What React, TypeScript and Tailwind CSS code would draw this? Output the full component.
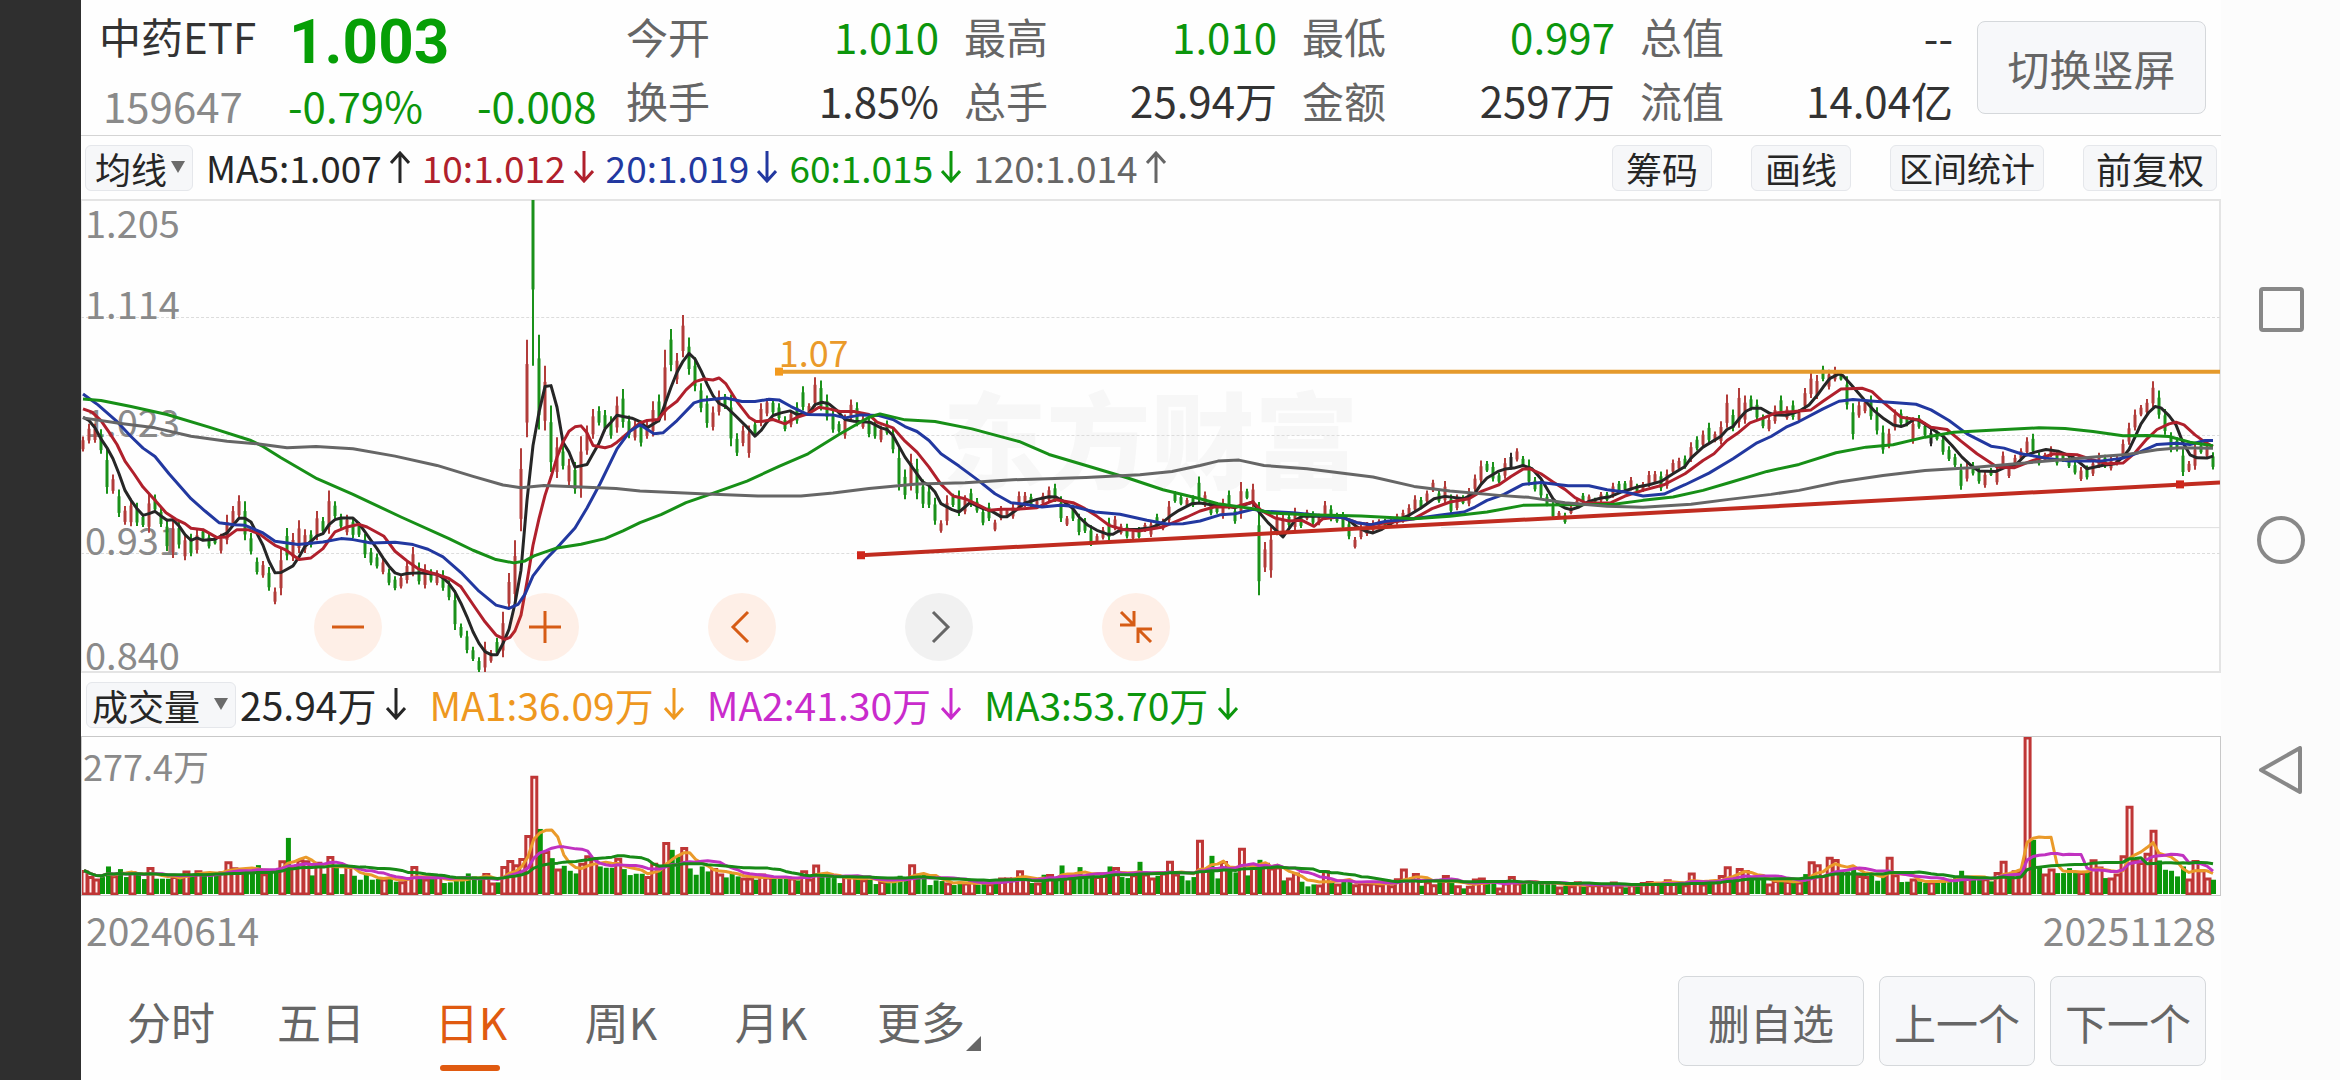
import React from "react";

// daily candles: colour, high, low (three units per pixel, 27 is the top of the pane)
const CANDLES = `
r738,783 r700,759 r700,757 g716,790 g775,910 r852,910 g897,980 r947,1003 r925,1008 g937,1007 g970,1010 r910,1027
g912,965 g950,1010 g985,1082 r985,1103 g993,1075 r1030,1110 g1030,1098 r1017,1090 g1015,1050 g1030,1075 g1035,1063
r1030,1090 r973,1062 r947,1008 r915,985 g933,1050 g1028,1093 g1102,1153 r1112,1163 g1130,1202 r1192,1242 r1075,1215
g1013,1110 r1028,1112 r990,1088 r1017,1088 g1020,1072 r962,1050 g980,1030 r900,1030 g933,985 g970,1015 r973,1035
g980,1043 g995,1040 g1030,1103 g1073,1125 g1090,1135 r1105,1152 g1135,1185 g1158,1200 r1152,1195 r1110,1180
r1070,1158 g1117,1183 r1122,1195 g1137,1177 r1140,1185 g1140,1202 g1170,1230 g1200,1320 g1300,1343 g1322,1390
g1370,1413 g1402,1446 r1355,1446 r1380,1418 g1343,1395 r1265,1402 r1148,1257 r1050,1240 r773,1023 r447,740 g27,525
g432,717 r525,720 g645,845 r740,863 g765,837 r805,885 g815,910 r737,922 r705,793 r655,745 g647,705 g658,722
g677,745 r618,727 g595,712 g675,743 r690,750 g690,768 r690,745 r632,738 g612,695 r477,690 g415,542 r487,580
r373,500 g440,552 g500,602 g578,665 g615,712 r648,720 r600,675 g610,655 g612,767 g728,797 r705,767 r705,802
g690,738 r638,707 r622,677 g625,672 g638,690 g677,722 r658,710 g635,700 g587,660 r638,672 r560,650 g570,660
g612,690 g660,727 g692,727 r672,745 r627,690 g635,707 r675,715 g677,740 g692,745 r705,755 g690,733 g710,788
g770,900 g837,927 r790,900 g805,927 g867,953 g887,953 g922,1003 r990,1027 r915,1005 g910,950 g900,977 r915,972
g895,950 g923,967 g952,1005 g937,992 r988,1023 r947,990 r953,980 r940,985 r903,960 r905,950 g910,952 r925,955
r907,945 r888,935 g880,935 g918,995 r977,1007 g943,992 g970,1035 g983,1028 g1005,1067 r1030,1060 r1010,1048
g982,1050 r977,1020 r1000,1033 g1000,1045 r1017,1048 g1010,1045 r997,1025 r990,1040 g970,1013 r985,1020 r932,1000
g902,937 g912,945 r922,950 g915,950 g858,935 r903,950 g933,975 g937,970 r925,985 g900,957 g950,1000 r875,985
g895,927 r880,950 g935,1215 r1055,1145 r1010,1163 r970,1035 r970,1037 g970,1010 r952,1020 g970,1013 r958,990
g963,1003 r970,1005 r932,985 g945,993 g967,997 g965,1020 g987,1047 r1040,1075 r1003,1047 r995,1037 r990,1025
r987,1010 g985,1010 r985,1005 r970,1003 r958,997 r942,985 r915,965 g920,957 r900,938 r868,905 g900,937 r872,940
g912,970 r912,960 g915,942 r893,948 r852,903 r810,880 g812,845 g815,873 g847,878 r803,865 k787,837 r773,813
g797,830 g807,885 g860,903 g870,923 g910,948 g935,985 r962,985 g967,1000 r945,972 r925,950 g908,940 r912,938
g922,942 r905,935 g905,933 r877,922 g872,905 g872,900 r860,900 g880,905 r875,905 r842,890 r842,880 g843,902
r837,895 r807,850 r802,840 g795,835 r755,815 g737,780 r720,770 g697,757 r723,755 r692,762 r612,712 g657,722
r592,712 r615,700 g615,660 g627,690 g672,713 r677,722 r645,700 g615,672 r647,688 g630,688 r657,693 r592,655
r545,622 r553,625 g525,572 r537,597 r528,573 g545,570 g557,657 g638,747 r632,682 r625,668 g615,688 g650,732
g705,790 r715,773 r657,720 g657,705 g677,707 r680,760 g673,715 g695,740 k715,767 g720,750 g733,793 g767,812
g790,830 g820,898 r817,873 g815,855 g830,880 r840,892 g833,857 r833,883 r783,835 r820,863 r793,830 r773,810
r740,793 g730,790 g785,825 r787,812 r767,800 g780,825 g787,815 g795,833 g815,852 r830,872 g825,867 r807,857
r787,833 g793,833 r797,840 r795,825 r747,800 r697,763 r657,720 r643,677 r625,672 r572,650 g600,685 g655,733
g725,785 g740,783 g775,857 r812,845 r757,838 g757,790 r757,803 g785,837`;

// volume bars: colour and top edge, 676 is the base line
const VOLUMES = `
r602 r620 r628 g622 g590 r618 g598 g622 r606 g612 g628 r593 g627 g627 g627 r620 g622 r604 g613 r603 g610 g612 g612
r606 r576 r594 r602 g602 g602 g586 r612 g608 g605 r573 g504 r590 r570 r573 g617 r577 g612 r560 g590 g613 r590 g618
g630 g613 g630 g628 r628 g622 g636 r636 r624 r590 g620 r628 g628 r618 g640 g638 g632 g625 g611 g620 g630 r611 r640
g638 r590 r572 r585 r566 r497 r318 g477 r545 g565 r598 g588 g603 g611 r580 r558 r563 g590 g594 g594 r565 g598 g616
g612 g612 r620 r580 g592 r518 g540 g560 r533 g596 g615 g590 g605 r596 r613 g623 g608 g620 r625 r625 g630 r613 r622
g626 g626 g626 r625 g632 r603 r628 r586 g612 g622 g625 g640 r620 r618 g626 r630 g630 g643 r635 g640 g630 g618 g628
r585 g612 g612 g646 g632 g634 r640 g646 g636 r640 r636 g645 g636 r642 g630 r625 r625 r625 r603 r625 g640 r640 g615
r614 g625 g587 r622 g618 g592 g615 g615 r620 r615 g590 r593 g622 g625 r615 g576 r613 r625 g618 r610 r574 r613 g618
g632 g622 r511 r600 g558 g626 r575 g600 g608 r535 g617 r592 g570 r580 r595 r592 g632 r625 r610 g636 g650 g644 r646
r603 g636 r643 g632 g632 r645 r640 r642 r640 r645 r636 r648 r627 r598 r627 r611 g648 r636 r645 g630 r617 g640 r648
g656 r650 r628 r625 g642 g636 r655 r640 r620 r640 g640 g638 g638 g640 g638 g640 r652 g648 r648 r636 g650 r645 r645
r645 r650 r637 r650 g653 r645 g643 r638 r635 r640 g643 r630 r638 g640 r645 r610 r635 r643 g637 r635 r617 r591 g620
r596 r602 g630 g628 g630 r643 r632 g632 r635 g640 r637 g613 r576 r585 r617 r562 r569 g605 g605 g600 r617 r620 g615
g633 g618 r562 r615 g637 g636 r628 g635 g640 r637 g635 g630 g627 g625 g603 r625 g625 g628 r627 g635 r608 r574 g612
r603 r600 r200 g510 g590 r613 r598 g610 g610 g595 g610 r608 g605 r570 r592 g625 r625 r613 r558 r409 r570 r578 r550
r481 g572 g600 g603 g620 g590 r628 r572 r600 r625 g630`;

const MA5 = `2,680 8,690 14,712 20,745 26,772 32,805 38,850 44,900 50,930 56,955 62,975 68,970 74,963 80,977 86,990 92,988
98,1007 104,1033 110,1050 116,1043 122,1050 134,1047 140,1037 146,1028 152,1005 158,984 164,984 170,995 176,1030
182,1065 188,1113 194,1148 200,1147 206,1137 212,1127 218,1100 224,1068 230,1053 236,1037 242,1030 248,1003 254,988
260,983 272,983 278,1000 284,1025 290,1050 296,1075 302,1103 308,1128 314,1148 320,1154 326,1150 338,1148 356,1152
362,1163 368,1180 374,1205 380,1240 386,1280 392,1325 398,1360 404,1385 410,1394 416,1394 422,1360 428,1318 434,1240
440,1140 446,930 452,765 458,665 464,588 470,585 476,650 482,755 488,785 494,830 506,822 512,790 518,758 524,715
530,695 536,674 542,678 551,683 559,693 566,712 578,690 584,640 590,590 596,545 602,512 608,488 614,505 620,540
626,580 632,615 638,638 645,648 655,677 666,710 674,737 680,720 686,695 692,675 700,667 709,661 716,672 727,672
734,642 741,635 748,640 755,657 764,687 773,692 789,695 800,712 806,717 812,735 824,800 836,850 842,875 848,885
854,905 860,940 871,958 878,965 884,950 889,937 902,955 911,963 920,979 926,979 934,962 944,938 956,927 968,919
975,920 982,932 992,955 998,980 1007,1005 1016,1020 1027,1032 1032,1032 1040,1018 1057,1017 1070,1012 1080,1000
1089,978 1098,960 1111,940 1119,938 1130,943 1142,943 1154,952 1162,945 1172,935 1178,965 1187,997 1194,1017
1202,1040 1208,1015 1214,990 1221,978 1240,978 1262,980 1268,990 1276,1010 1285,1023 1292,1028 1301,1017 1315,990
1328,975 1340,953 1353,925 1364,918 1383,925 1394,908 1400,882 1406,863 1417,843 1424,836 1433,833 1442,825 1451,835
1460,865 1466,895 1472,925 1478,943 1484,953 1490,958 1498,950 1508,933 1520,923 1528,920 1540,905 1556,890 1568,883
1580,873 1592,850 1604,828 1610,803 1622,770 1640,737 1646,717 1652,708 1658,685 1665,662 1671,653 1680,653 1688,667
1694,673 1705,674 1718,662 1728,643 1736,615 1742,590 1749,563 1758,550 1762,555 1770,582 1783,627 1793,660 1803,685
1812,703 1820,708 1825,703 1833,687 1838,689 1850,713 1862,737 1871,765 1881,800 1891,828 1898,842 1915,843 1923,832
1935,822 1944,795 1954,785 1965,777 1977,782 1992,800 2006,835 2021,825 2034,820 2042,800 2048,777 2054,740 2060,700
2068,665 2074,648 2080,652 2088,675 2095,703 2102,757 2109,793 2116,802 2126,803 2132,797`;

const MA10 = `2,655 11,665 20,690 28,725 36,762 44,812 53,850 62,890 74,930 85,967 95,987 104,1000 110,1014 122,1018
136,1042 146,1040 156,1018 167,1018 178,1030 186,1048 194,1065 204,1078 218,1108 230,1103 242,1075 249,1045 254,1025
266,1010 278,1002 286,1010 303,1038 314,1083 326,1112 338,1137 356,1153 368,1165 380,1190 392,1243 404,1295 415,1335
424,1348 429,1342 434,1322 440,1275 446,1175 452,1065 458,985 464,915 470,860 476,800 482,755 488,722 494,709 500,706
506,727 512,765 524,772 530,767 536,755 549,722 559,697 566,690 577,687 586,655 596,632 605,598 614,573 623,565
632,568 638,562 645,580 656,633 668,680 675,693 682,692 692,687 704,700 716,680 727,670 738,650 748,655 759,663
773,663 788,672 796,695 812,712 824,752 836,785 848,830 860,882 872,917 884,925 896,942 908,960 920,957 934,957
956,952 968,935 975,928 992,937 1004,955 1016,978 1028,1005 1041,1017 1058,1022 1082,1010 1094,995 1106,980 1119,962
1133,950 1154,950 1172,935 1180,960 1194,983 1208,992 1221,990 1233,1008 1242,985 1258,980 1268,988 1276,997
1290,1003 1312,995 1333,985 1351,955 1369,935 1388,925 1401,902 1418,883 1430,858 1442,836 1449,835 1460,850 1472,875
1484,897 1494,922 1505,938 1530,937 1544,917 1562,900 1583,883 1604,850 1622,810 1633,790 1646,750 1658,725 1669,697
1682,683 1695,667 1713,663 1730,658 1742,632 1760,595 1781,593 1791,603 1803,637 1820,680 1838,688 1850,710 1866,717
1880,752 1896,790 1916,830 1933,832 1950,812 1973,790 1996,793 2011,808 2026,820 2042,818 2054,787 2066,745 2076,717
2088,700 2095,695 2103,703 2114,733 2124,755 2132,768`;

const MA20 = `2,610 17,643 35,690 50,738 62,773 74,798 88,850 110,925 124,962 138,997 153,1003 164,1005 182,1028 194,1053
217,1063 242,1055 260,1045 272,1048 290,1058 314,1056 332,1063 347,1077 362,1100 380,1147 398,1203 415,1245 428,1255
437,1243 444,1212 452,1157 464,1110 479,1063 494,1013 506,953 519,880 536,775 549,722 559,703 573,730 582,727 596,690
613,637 620,630 645,622 661,633 674,633 688,626 698,628 710,648 727,672 752,673 764,682 780,673 798,675 812,687
824,708 836,723 848,750 860,790 878,827 896,867 914,910 930,937 944,942 961,950 979,945 992,948 1014,965 1039,972
1066,990 1086,1001 1102,1000 1119,992 1140,973 1154,970 1172,957 1183,963 1212,967 1237,975 1262,982 1276,997
1290,1003 1305,993 1333,985 1358,975 1383,965 1394,950 1406,930 1423,912 1442,882 1460,876 1487,886 1508,886 1526,898
1544,905 1562,917 1583,911 1604,883 1628,848 1652,805 1676,757 1690,738 1705,710 1718,693 1742,655 1758,632 1772,627
1793,632 1812,636 1835,641 1850,658 1868,690 1886,730 1910,767 1923,773 1940,790 1965,803 1988,812 2019,812 2042,803
2057,787 2076,762 2095,758 2109,762 2124,750 2132,750`;

const MA60 = `2,625 20,630 50,648 86,672 128,710 170,750 182,768 200,802 236,865 272,912 320,980 368,1045 392,1080
415,1108 433,1118 444,1112 453,1097 476,1073 500,1062 524,1045 542,1022 559,997 580,973 605,937 626,915 666,872
698,828 727,790 758,732 788,680 799,670 824,688 854,693 891,715 938,753 968,792 1005,825 1046,862 1082,898 1119,925
1137,940 1172,955 1190,968 1226,973 1280,977 1333,985 1369,978 1406,965 1442,945 1484,943 1533,942 1562,930 1592,920
1622,900 1648,877 1686,843 1718,822 1755,787 1785,770 1812,763 1844,740 1873,725 1919,718 1958,712 1984,714 2012,723
2042,736 2066,735 2088,738 2109,755 2132,766`;

const MA120 = `2,682 38,698 74,712 110,737 146,752 176,760 206,772 235,768 272,775 314,797 356,825 392,858 422,884
440,892 463,885 500,890 535,894 559,902 620,910 677,917 720,917 752,908 788,894 836,881 884,877 932,868 1005,861
1059,853 1091,843 1119,825 1137,812 1158,809 1183,825 1226,835 1292,860 1333,888 1369,902 1418,915 1448,921 1484,937
1526,948 1562,951 1610,942 1648,927 1690,912 1718,900 1758,875 1802,855 1844,840 1889,832 1935,820 1984,807 2019,798
2046,792 2076,778 2099,772 2132,773`;

const STEP = 6;
const candleColors: Record<string, string> = { r: "#b23c3a", g: "#1a911a", k: "#262626" };

const candles = CANDLES.trim()
  .split(/\s+/)
  .map((c) => {
    const [high, low] = c.slice(1).split(",").map(Number);
    return { color: candleColors[c[0]], high, low };
  });

const volumes = VOLUMES.trim()
  .split(/\s+/)
  .map((v) => ({ up: v[0] === "r", top: Number(v.slice(1)) }));

function volumeAverage(days: number) {
  return volumes
    .map((_, i) => {
      const part = volumes.slice(Math.max(0, i - days + 1), i + 1);
      const sum = part.reduce((total, v) => total + v.top, 0);
      return `${2 + i * STEP},${Math.round(sum / part.length)}`;
    })
    .join(" ");
}

function Line({ points, color, width = 3 }: { points: string; color: string; width?: number }) {
  return (
    <polyline
      points={points}
      fill="none"
      stroke={color}
      strokeWidth={width}
      strokeLinejoin="round"
      vectorEffect="non-scaling-stroke"
    />
  );
}

function Knob({ x, y, color }: { x: number; y: number; color: string }) {
  return (
    <path
      d={`M${x} ${y}h0.01`}
      stroke={color}
      strokeWidth={8}
      strokeLinecap="square"
      vectorEffect="non-scaling-stroke"
    />
  );
}

function PriceChart() {
  return (
    <svg className="relative w-full h-full" viewBox="0 27 2139 1419" preserveAspectRatio="none">
      <path d="M1360 1012H2139" stroke="#dedede" strokeWidth={1} vectorEffect="non-scaling-stroke" />
      {candles.map((c, i) => {
        const x = 2 + i * STEP;
        const size = c.low - c.high;
        const bodyTop = c.high + (i === 75 ? 0 : size * 0.25);
        const bodyEnd = c.low - size * (i === 75 ? 0.46 : 0.15);
        return (
          <g key={i} stroke={c.color}>
            <path d={`M${x} ${c.high}V${c.low}`} strokeWidth={2} vectorEffect="non-scaling-stroke" />
            <path d={`M${x} ${bodyTop}V${bodyEnd}`} strokeWidth={3} vectorEffect="non-scaling-stroke" />
          </g>
        );
      })}
      <Line points={MA5} color="#262626" />
      <Line points={MA10} color="#b0202c" />
      <Line points={MA20} color="#2238a0" />
      <Line points={MA60} color="#178f17" />
      <Line points={MA120} color="#666666" />
      <Line points="698,543 2139,543" color="#e59a2c" width={4} />
      <Knob x={698} y={543} color="#f39a1e" />
      <Line points="780,1095 2139,876" color="#c02c20" width={4} />
      <Knob x={780} y={1095} color="#cf261b" />
      <Knob x={2099} y={882} color="#cf261b" />
    </svg>
  );
}

function VolumeChart() {
  return (
    <svg className="w-full h-full" viewBox="0 200 2139 476" preserveAspectRatio="none">
      {volumes.map((v, i) => {
        const x = 2 + i * STEP;
        return v.up ? (
          <rect
            key={i}
            x={x - 2}
            y={v.top + 3}
            width={5}
            height={670 - v.top}
            fill="#fff0f0"
            stroke="#bf3636"
            strokeWidth={3}
            vectorEffect="non-scaling-stroke"
          />
        ) : (
          <rect key={i} x={x - 2} y={v.top} width={5} height={673 - v.top} fill="#0a960a" />
        );
      })}
      <Line points={volumeAverage(5)} color="#ea9a2a" />
      <Line points={volumeAverage(10)} color="#c032c0" />
      <Line points={volumeAverage(20)} color="#178a17" />
    </svg>
  );
}

function Arrow({ up = false }: { up?: boolean }) {
  return (
    <svg width="20" height="32" viewBox="0 0 20 32" fill="none" stroke="currentColor" strokeWidth="3">
      {up ? <path d="M10 32V2M1 12L10 2L19 12" /> : <path d="M10 0V30M1 20L10 30L19 20" />}
    </svg>
  );
}

function Picker({ label, value, className }: { label: string; value: string; className: string }) {
  return (
    <div className="relative">
      <select
        aria-label={label}
        className={`appearance-none h-[46px] rounded-md border border-gray-200 bg-[#f6f7f9] text-[36px] leading-[44px] text-[#262626] ${className}`}
      >
        <option>{value}</option>
      </select>
      <svg
        className="absolute right-2 top-4 pointer-events-none"
        width="14"
        height="12"
        viewBox="0 0 14 12"
        fill="#6b6b6b"
      >
        <path d="M0 0H14L7 12Z" />
      </svg>
    </div>
  );
}

const quotes = [
  { top: ["今开", "1.010"], bottom: ["换手", "1.85%"] },
  { top: ["最高", "1.010"], bottom: ["总手", "25.94万"] },
  { top: ["最低", "0.997"], bottom: ["金额", "2597万"] },
  { top: ["总值", "--"], bottom: ["流值", "14.04亿"] },
];

const averages = [
  { text: "MA5:1.007", up: true, color: "text-[#262626]" },
  { text: "10:1.012", up: false, color: "text-[#b0202c]" },
  { text: "20:1.019", up: false, color: "text-[#2238a0]" },
  { text: "60:1.015", up: false, color: "text-[#0c960c]" },
  { text: "120:1.014", up: true, color: "text-[#666666]" },
];

const volumeTexts = [
  { text: "25.94万", color: "text-[#262626]" },
  { text: "MA1:36.09万", color: "text-[#ee981f]" },
  { text: "MA2:41.30万", color: "text-[#c92bcc]" },
  { text: "MA3:53.70万", color: "text-[#0c960c]" },
];

const tools = [
  { text: "筹码", size: "text-[36px] px-[13px]" },
  { text: "画线", size: "text-[36px] px-[13px]" },
  { text: "区间统计", size: "text-[34px] px-2" },
  { text: "前复权", size: "text-[36px] px-3" },
];

const tabs = ["分时", "五日", "日K", "周K", "月K", "更多"];

const orangeRound = "bg-[#fd6f22]/10 text-[#d65c16]";
const roundButtons = [
  { label: "缩小", color: orangeRound, d: "M18 34H50" },
  { label: "放大", color: orangeRound, d: "M18 34H50M34 18V50" },
  { label: "左移", color: orangeRound, d: "M40 19L25 34L40 49" },
  { label: "右移", color: "bg-black/5 text-[#666666]", d: "M28 19L43 34L28 49" },
  { label: "收起", color: orangeRound, d: "M19 19L31 31M18 32H32V18M49 49L37 37M50 36H36V50" },
];

function Header() {
  return (
    <header className="flex h-[136px] border-b border-[#d4d4d4] pl-[18px] pr-[15px] text-[42px]">
      <div className="w-[527px] pt-1">
        <div className="flex h-16 items-center">
          <h1 className="w-[190px] leading-[64px] text-[#333333]">中药ETF</h1>
          <span className="pt-3 font-['Roboto',sans-serif] text-[62px] leading-[62px] font-bold text-[#069f06]">
            1.003
          </span>
        </div>
        <div className="flex h-16 pt-1 leading-[66px] text-[#0c960c]">
          <span className="w-[189px] pl-1 text-[#8a8a8a]">159647</span>
          <span className="w-[189px]">-0.79%</span>
          <span>-0.008</span>
        </div>
      </div>
      <dl className="flex-1 grid grid-cols-4 gap-x-[25px] pt-1 leading-[64px]">
        {quotes.map((q) => (
          <div key={q.top[0]}>
            <div className="flex justify-between">
              <dt className="text-[#666666]">{q.top[0]}</dt>
              <dd className={q.top[1] === "--" ? "text-[#333333]" : "text-[#0c960c]"}>{q.top[1]}</dd>
            </div>
            <div className="flex justify-between">
              <dt className="text-[#666666]">{q.bottom[0]}</dt>
              <dd className="text-[#333333]">{q.bottom[1]}</dd>
            </div>
          </div>
        ))}
      </dl>
      <button className="mt-[21px] ml-[24px] w-[229px] h-[93px] rounded-lg border border-[#d5d8db] bg-[#f7f8fa] text-[#666666]">
        切换竖屏
      </button>
    </header>
  );
}

function SystemBar() {
  return (
    <nav className="w-[119px] flex flex-col items-center justify-center gap-[182px] bg-[#fcfcfc]">
      <button aria-label="最近任务">
        <svg width="48" height="48" fill="none" stroke="#888888" strokeWidth="4">
          <rect x="4" y="3" width="41" height="41" rx="2" />
        </svg>
      </button>
      <button aria-label="主屏幕">
        <svg width="48" height="48" fill="none" stroke="#888888" strokeWidth="4">
          <circle cx="24" cy="24" r="22" />
        </svg>
      </button>
      <button aria-label="返回">
        <svg width="48" height="48" fill="none" stroke="#888888" strokeWidth="4" strokeLinejoin="round">
          <path d="M43 2V46L4 24Z" />
        </svg>
      </button>
    </nav>
  );
}

export default function App() {
  return (
    <div className="flex min-h-screen bg-[#fefefe] font-['Noto_Sans_CJK_SC',sans-serif] whitespace-nowrap">
      <div className="w-[81px] bg-[#2f2f2f]"></div>
      <main className="flex-1 min-w-0 flex flex-col">
        <Header />

        <div className="flex items-center h-[63px] pl-1 pr-1">
          <Picker label="均线" value="均线" className="w-[108px] pl-[9px]" />
          <div className="flex flex-1 gap-3 pl-[13px] pb-0.5 text-[37px] leading-[42px]">
            {averages.map((a) => (
              <span key={a.text} className={`flex items-center gap-2 ${a.color}`}>
                {a.text}
                <Arrow up={a.up} />
              </span>
            ))}
          </div>
          <div className="flex gap-[39px]">
            {tools.map((t) => (
              <button
                key={t.text}
                className={`h-[46px] rounded-md border border-gray-200 bg-[#f6f7f9] leading-[42px] text-[#262626] ${t.size}`}
              >
                {t.text}
              </button>
            ))}
          </div>
        </div>

        <section className="relative h-[474px] border-2 border-l border-[#e4e4e4]">
          <div className="absolute inset-0 flex items-center justify-center text-[104px] leading-[104px] font-black text-[#f7f7f7]">
            东方财富
          </div>
          <div className="absolute -inset-px grid grid-rows-4 text-[38px] leading-7 text-[#8a8a8a]">
            <div className="flex flex-col justify-between pl-1 pt-2 border-b border-dashed border-[#dcdcdc]">
              <span>1.205</span>
              <span>1.114</span>
            </div>
            <div className="flex items-end pl-1 border-b border-dashed border-[#dcdcdc]">1.023</div>
            <div className="flex items-end pl-1 border-b border-dashed border-[#dcdcdc]">0.931</div>
            <div className="flex items-end pl-1 pb-1">0.840</div>
          </div>
          <div className="absolute -inset-px">
            <PriceChart />
          </div>
          <span className="absolute left-[32.6%] top-[28%] text-[36px] leading-[36px] text-[#ea9a2a]">
            1.07
          </span>
          <div className="absolute left-[232px] bottom-2.5 flex gap-[129px]">
            {roundButtons.map((b) => (
              <button key={b.label} aria-label={b.label} className={`rounded-full ${b.color}`}>
                <svg width="68" height="68" fill="none" stroke="currentColor" strokeWidth="3">
                  <path d={b.d} />
                </svg>
              </button>
            ))}
          </div>
        </section>

        <div className="flex items-center h-[63px] pl-[5px]">
          <Picker label="指标" value="成交量" className="w-[150px] pl-[5px]" />
          <div className="flex gap-[23px] pl-1 pb-0.5 text-[39px] leading-[42px]">
            {volumeTexts.map((v) => (
              <span key={v.text} className={`flex items-center gap-2.5 ${v.color}`}>
                {v.text}
                <Arrow />
              </span>
            ))}
          </div>
        </div>

        <section className="relative h-[160px] border border-[#c8c8c8]">
          <span className="absolute left-px top-2.5 text-[36px] leading-[36px] text-[#8a8a8a]">277.4万</span>
          <div className="absolute inset-0">
            <VolumeChart />
          </div>
        </section>

        <div className="flex justify-between px-[5px] text-[39px] leading-[66px] text-[#8a8a8a]">
          <span>20240614</span>
          <span>20251128</span>
        </div>

        <footer className="flex flex-1 items-center justify-between pl-[15px] pr-[15px]">
          <div className="flex text-[44px] leading-[60px]">
            {tabs.map((t) => (
              <button
                key={t}
                className={`relative w-[150px] ${t === "日K" ? "text-[#e05a10]" : "text-[#666666]"}`}
              >
                {t}
                {t === "日K" && (
                  <span className="absolute left-[44px] -bottom-[20px] w-[60px] h-[6px] rounded-full bg-[#e05a10]"></span>
                )}
                {t === "更多" && (
                  <svg className="absolute right-[15px] bottom-0" width="15" height="15" fill="#666666">
                    <path d="M15 0V15H0Z" />
                  </svg>
                )}
              </button>
            ))}
          </div>
          <div className="flex gap-[15px] text-[42px] text-[#666666]">
            <button className="w-[186px] h-[90px] rounded-lg border border-[#d5d8db] bg-[#f7f8fa]">删自选</button>
            <button className="w-[156px] h-[90px] rounded-lg border border-[#d5d8db] bg-[#f7f8fa]">上一个</button>
            <button className="w-[156px] h-[90px] rounded-lg border border-[#d5d8db] bg-[#f7f8fa]">下一个</button>
          </div>
        </footer>
      </main>
      <SystemBar />
    </div>
  );
}
